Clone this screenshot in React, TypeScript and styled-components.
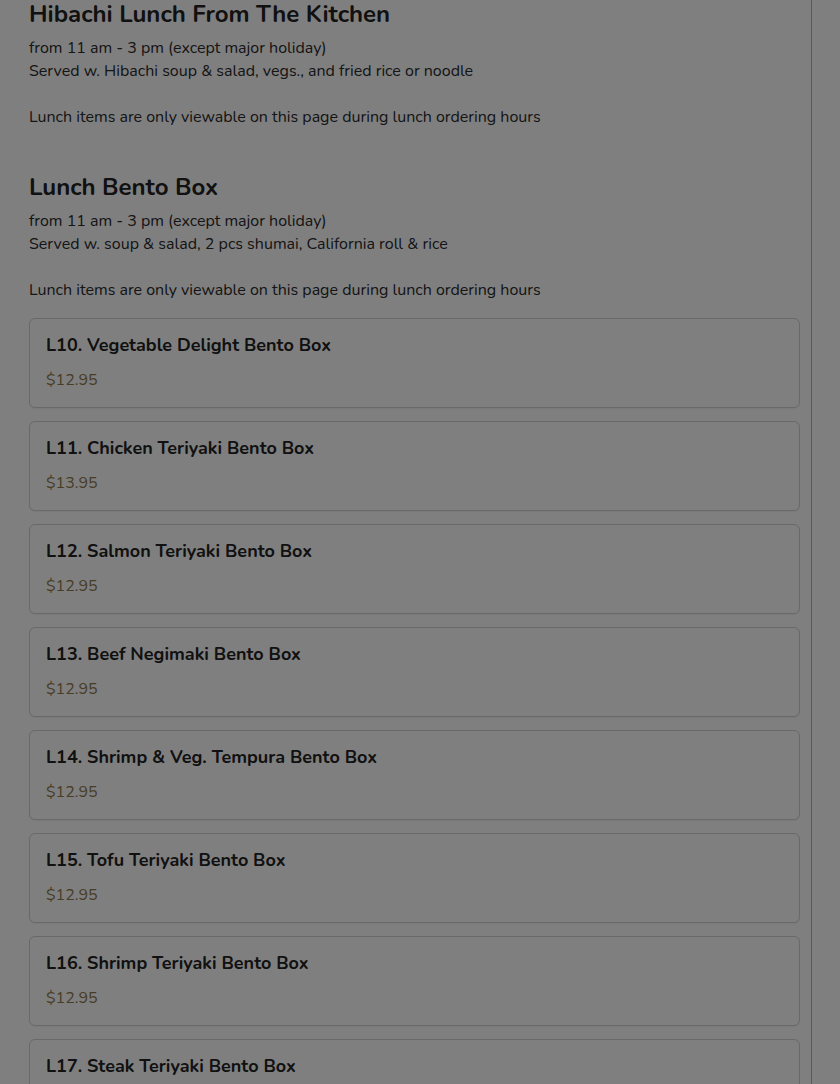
import styled, { createGlobalStyle } from "styled-components";

const GlobalStyle = createGlobalStyle`
  html, body {
    margin: 0;
    padding: 0;
    background: #ffffff;
    font-family: "Nunito", "Lato", "Noto Sans", sans-serif;
    color: #222222;
  }
`;

const Page = styled.div`
  display: flex;
  min-height: 100vh;
  background: #ffffff;
`;

const Main = styled.main`
  width: 812px;
  box-sizing: border-box;
  padding: 0 11px 0 29px;
  border-right: 1px solid #b4b4b4;
`;

const Section = styled.section`
  & + & {
    margin-top: 44px;
  }
`;

const Heading = styled.h2`
  margin: 0 0 8px;
  font-size: 24px;
  line-height: 29px;
  font-weight: 700;
  color: #222222;
`;

const Note = styled.p`
  margin: 0;
  font-size: 16px;
  line-height: 23px;
  color: #2a2a2a;
`;

const ItemList = styled.div`
  display: flex;
  flex-direction: column;
  gap: 13px;
  margin-top: 16px;
`;

const ItemCard = styled.div`
  border: 1px solid #d2d2d2;
  border-radius: 6px;
  padding: 14px 16px 15px;
  background: #ffffff;
  box-shadow: 0 1px 2px rgba(0, 0, 0, 0.06);
`;

const ItemName = styled.div`
  font-size: 18px;
  line-height: 24px;
  font-weight: 700;
  color: #222222;
  margin-bottom: 11px;
`;

const Price = styled.div`
  font-size: 16px;
  line-height: 24px;
  color: #8e7a4c;
`;

const Side = styled.aside`
  flex: 1;
`;

const Backdrop = styled.div`
  position: fixed;
  inset: 0;
  background: rgba(0, 0, 0, 0.5);
`;

const items = [
  { name: "L10. Vegetable Delight Bento Box", price: "$12.95" },
  { name: "L11. Chicken Teriyaki Bento Box", price: "$13.95" },
  { name: "L12. Salmon Teriyaki Bento Box", price: "$12.95" },
  { name: "L13. Beef Negimaki Bento Box", price: "$12.95" },
  { name: "L14. Shrimp & Veg. Tempura Bento Box", price: "$12.95" },
  { name: "L15. Tofu Teriyaki Bento Box", price: "$12.95" },
  { name: "L16. Shrimp Teriyaki Bento Box", price: "$12.95" },
  { name: "L17. Steak Teriyaki Bento Box", price: "$12.95" },
];

const App = () => {
  return (
    <>
      <GlobalStyle />
      <Page>
        <Main>
          <Section>
            <Heading>Hibachi Lunch From The Kitchen</Heading>
            <Note>
              from 11 am - 3 pm (except major holiday)
              <br />
              Served w. Hibachi soup &amp; salad, vegs., and fried rice or noodle
              <br />
              <br />
              Lunch items are only viewable on this page during lunch ordering hours
            </Note>
          </Section>
          <Section>
            <Heading>Lunch Bento Box</Heading>
            <Note>
              from 11 am - 3 pm (except major holiday)
              <br />
              Served w. soup &amp; salad, 2 pcs shumai, California roll &amp; rice
              <br />
              <br />
              Lunch items are only viewable on this page during lunch ordering hours
            </Note>
            <ItemList>
              {items.map((item) => (
                <ItemCard key={item.name}>
                  <ItemName>{item.name}</ItemName>
                  <Price>{item.price}</Price>
                </ItemCard>
              ))}
            </ItemList>
          </Section>
        </Main>
        <Side />
      </Page>
      <Backdrop />
    </>
  );
};

export default App;
